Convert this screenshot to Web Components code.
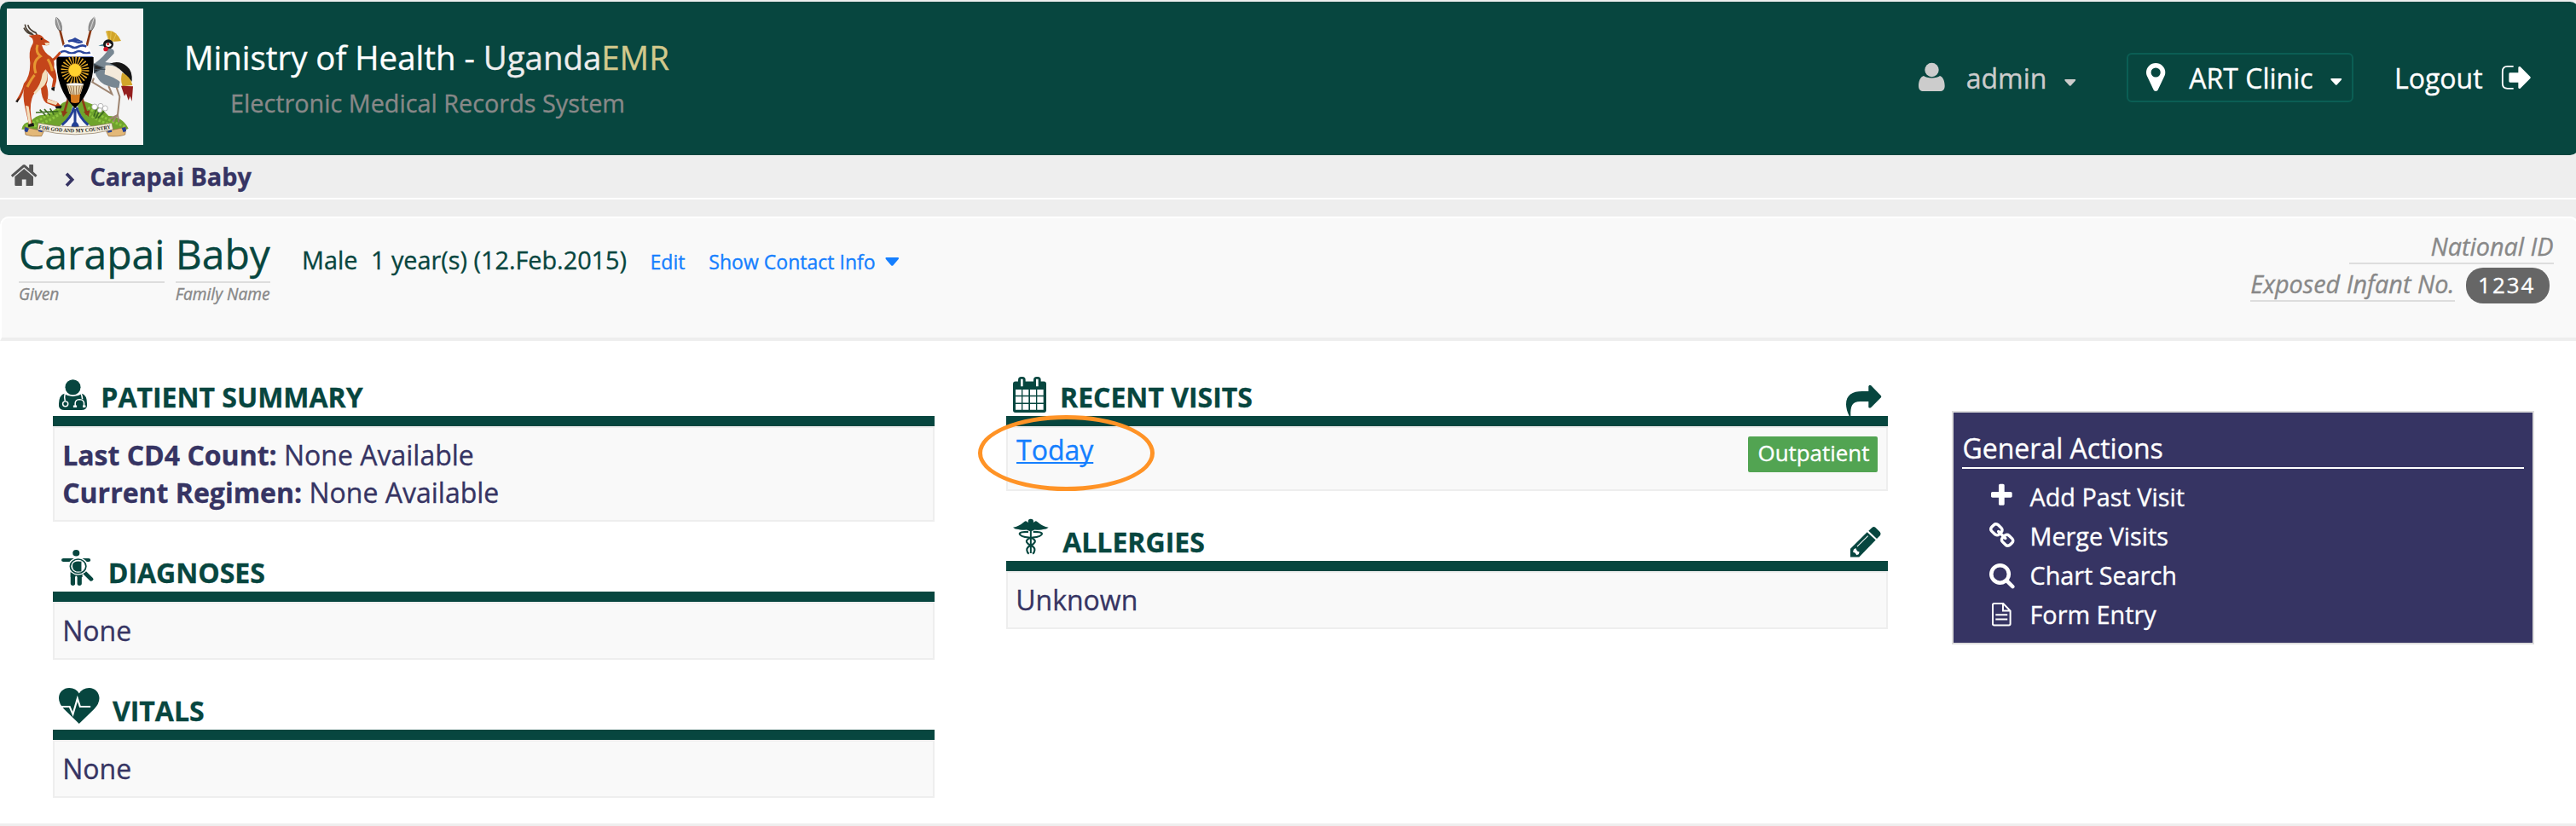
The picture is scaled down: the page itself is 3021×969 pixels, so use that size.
<!DOCTYPE html>
<html lang="en">
<head>
<meta charset="utf-8">
<title>UgandaEMR - Carapai Baby</title>
<style>
html{background:#eee}
body{margin:0;width:3021px;height:969px;overflow:hidden;background:#eee;font-family:"Open Sans",sans-serif;-webkit-text-stroke:.35px}
</style>
</head>
<body>
<emr-app></emr-app>
<script>
const ICONS = {
  home: ['88 256 1616 1280', '<path d="M1472 992v480q0 26-19 45t-45 19h-384v-384h-256v384h-384q-26 0-45-19t-19-45v-480q0-1 .5-3t.5-3l575-474 575 474q1 2 1 6zm223-69l-62 74q-8 9-21 11h-3q-13 0-21-7l-692-577-692 577q-12 8-24 7-13-2-21-11l-62-74q-8-10-7-23.5t11-21.5l719-599q32-26 76-26t76 26l244 204v-195q0-14 9-23t23-9h192q14 0 23 9t9 23v408l219 182q10 8 11 21.5t-7 23.5z"/>'],
  chevron: ['0 0 33 52', '<path d="M6 5l20 21L6 47" fill="none" stroke="currentColor" stroke-width="11"/>'],
  user: ['42 42 92 99', '<ellipse cx="88.500" cy="66" rx="24.500" ry="24.500"/><path d="M60 87C70 97 107 97 117 87C130 91 134 109 134 122C134 135 127 141 117 141H59C49 141 42 135 42 122C42 109 46 91 60 87Z"/>'],
  pin: ['384 128 1024 1536', '<path d="M1152 640q0-106-75-181t-181-75-181 75-75 181 75 181 181 75 181-75 75-181zm256 0q0 109-33 179l-364 774q-16 33-47.500 52t-67.500 19-67.500-19-46.500-52l-365-774q-33-70-33-179 0-212 150-362t362-150 362 150 150 362z"/>'],
  caret: ['0 0 40 24', '<path d="M3 0H37Q41 1 38 5L23 22Q20 25 17 22L2 5Q-1 1 3 0Z"/>'],
  logout: ['1363 79 102 84', '<path d="M1404 81.500H1383Q1365.500 81.500 1365.500 99V142Q1365.500 159.500 1383 159.500H1404" fill="none" stroke="currentColor" stroke-width="5.500"/><path d="M1389 104H1421V85Q1423 80 1428 83L1463 118Q1466 121 1463 124L1428 159Q1423 162 1421 157V138H1392Q1388 138 1388 134V108Q1388 104 1392 104Z"/>'],
  plus: ['192 192 1408 1408', '<path d="M1600 736v192q0 40-28 68t-68 28h-416v416q0 40-28 68t-68 28h-192q-40 0-68-28t-28-68v-416h-416q-40 0-68-28t-28-68v-192q0-40 28-68t68-28h416v-416q0-40 28-68t68-28h192q40 0 68 28t28 68v416h416q40 0 68 28t28 68z"/>'],
  link: ['80 16 1632 1632', '<path d="M1520 1216q0-40-28-68l-208-208q-28-28-68-28-42 0-72 32 3 3 19 18.500t21.500 21.500 15 19 13 25.500 3.500 27.500q0 40-28 68t-68 28q-15 0-27.500-3.500t-25.500-13-19-15-21.500-21.500-18.500-19q-33 31-33 73 0 40 28 68l206 207q27 27 68 27 40 0 68-26l147-146q28-28 28-67zm-703-705q0-40-28-68l-206-207q-28-28-68-28-39 0-68 27l-147 146q-28 28-28 67 0 40 28 68l208 208q27 27 68 27 42 0 72-31-3-3-19-18.500t-21.500-21.500-15-19-13-25.500-3.500-27.500q0-40 28-68t68-28q15 0 27.500 3.500t25.500 13 19 15 21.500 21.500 18.500 19q33-31 33-73zm895 705q0 120-85 203l-147 146q-83 83-203 83-121 0-204-85l-206-207q-83-83-83-203 0-123 88-209l-88-88q-86 88-208 88-120 0-204-84l-208-208q-84-84-84-204t85-203l147-146q83-83 203-83 121 0 204 85l206 207q83 83 83 203 0 123-88 209l88 88q86-88 208-88 120 0 204 84l208 208q84 84 84 204z"/>'],
  search: ['64 128 1664 1664', '<path d="M1216 832q0-185-131.500-316.500t-316.500-131.500-316.500 131.500-131.500 316.500 131.500 316.500 316.500 131.500 316.500-131.500 131.500-316.500zm512 832q0 52-38 90t-90 38q-54 0-90-38l-343-342q-179 124-399 124-143 0-273.500-55.500t-225-150-150-225-55.500-273.500 55.500-273.500 150-225 225-150 273.500-55.500 273.500 55.500 225 150 150 225 55.500 273.500q0 220-124 399l343 343q37 37 37 90z"/>'],
  file: ['167 681 68 83', '<path d="M175 684H207L232 710V756Q232 761 227 761H175Q170 761 170 756V689Q170 684 175 684ZM206 686V710H231M180 724H222M180 740H222" fill="none" stroke="currentColor" stroke-width="6"/>'],
  doctor: ['75 43 86 105', '<ellipse cx="118" cy="70" rx="23.500" ry="26.500"/><path d="M92 92Q100 100 118 101Q136 100 145 92Q161 97 161 126V134Q160 148 144 148H92Q76 148 75 134V126Q76 97 92 92Z"/><g fill="none" stroke="#fff" stroke-width="4"><path d="M94 91Q91 104 94 117"/><ellipse cx="95" cy="127" rx="8" ry="8.500"/><path d="M143 91Q147 103 147 111M125 137V124Q126 112 139 112Q151 113 152 124V137"/></g><path d="M119 132h11v7h-11zM148 132h9v7h-9z" fill="#fff"/><circle cx="95" cy="127" r="4"/>'],
  diagnosis: ['84 625 98 122', '<ellipse cx="129" cy="636" rx="10.500" ry="11"/><path d="M90 660H167" stroke="currentColor" stroke-width="12" stroke-linecap="round"/><path d="M119 704V740M139 704V740" stroke="currentColor" stroke-width="14" stroke-linecap="round"/><path d="M112 662H148V718H112Z"/><path d="M129 714V748" stroke="#fff" stroke-width="5"/><path d="M149 695L177 727" stroke="#fff" stroke-width="16"/><path d="M154 702L175 725" stroke="currentColor" stroke-width="13" stroke-linecap="round"/><circle cx="135" cy="681" r="30" fill="#fff"/><circle cx="135" cy="681" r="24" fill="#fff" stroke="currentColor" stroke-width="4.500"/><path d="M142 665Q122 662 118 675Q116 694 130 699H145V664Z"/>'],
  heart: ['75 1096 124 122', '<path d="M137 1218L92 1169Q75 1151 75 1131C75 1110 90 1096 107 1096Q128 1097 137 1115Q147 1097 168 1096C185 1096 199 1112 199 1131Q199 1151 182 1169Z"/><path d="M83 1160H108L118 1186L132 1132L140 1160H172" fill="none" stroke="#fff" stroke-width="5.500"/>'],
  calendar: ['174 37 117 125', '<path d="M182 53H283Q291 53 291 62V153Q291 162 283 162H182Q174 162 174 153V62Q174 53 182 53Z"/><rect x="192" y="37" width="26" height="42" rx="11"/><rect x="246" y="37" width="26" height="42" rx="11"/><path d="M201 45.500h8v25h-8zM255 45.500h8v25h-8z" fill="#fff"/><path fill="#fff" d="M183 82h21v20h-21zM208 82h21v20h-21zM234 82h21v20h-21zM259 82h22v20h-22zM183 106h21v22h-21zM208 106h21v22h-21zM234 106h21v22h-21zM259 106h22v22h-22zM183 132h21v20h-21zM208 132h21v20h-21zM234 132h21v20h-21zM259 132h22v20h-22z"/>'],
  caduceus: ['174 537 125 125', '<circle cx="236.500" cy="546" r="9.500"/><path d="M174 566Q195 563 214 546Q219 541 223 546L236 555L250 546Q254 541 259 546Q278 563 299 566Q292 573 280 573Q272 576 250 574L236 580L222 574Q200 577 193 573Q181 573 174 566Z"/><path d="M236.500 556V656" stroke="currentColor" stroke-width="6"/><g fill="none" stroke="currentColor" stroke-width="6.500"><path d="M228 581Q198 581 197 588Q199 599 230 601Q254 605 251 617Q248 624 236 629Q221 635 223 646Q224 654 230 658"/><path d="M245 581Q275 581 276 588Q274 599 243 601Q219 605 222 617Q225 624 237 629Q252 635 250 646Q249 654 243 658"/></g>'],
  share: ['555 66 124 108', '<path d="M566 174Q555 152 555 133C555 100 577 87 612 87H634V70Q637 63 643 67L678 103Q680 106 678 109L643 144Q637 148 634 143V123H608C577 122 570 136 571 174Z"/>'],
  pencil: ['571 563 107 106', '<path d="M630 582L660 609L602 669H571V640Z"/><path d="M635 577L647 566Q653 560 659 565L675 581Q680 587 676 593L664 605Z"/><path d="M595 632L633 595" fill="none" stroke="#fff" stroke-width="3"/><path d="M583 642L590 638L595 648L603 651L600 659L593 662L588 655L580 651Z" fill="#fff"/>']
};
const define = (tag, markup, setup) => customElements.define(tag, class extends HTMLElement {
  constructor() {
    super();
    const t = document.createElement('template');
    t.innerHTML = markup;
    this.attachShadow({mode: 'open'}).append(t.content.cloneNode(true));
  }
  connectedCallback() { if (setup) setup(this, this.shadowRoot); }
});

define('emr-icon', '<style>:host{display:block;flex:none}svg{display:block;width:100%;height:100%;overflow:visible;fill:currentColor}</style><svg preserveAspectRatio="none" aria-hidden="true"></svg>', (el, root) => {
  const [box, body] = ICONS[el.getAttribute('name')];
  const svg = root.querySelector('svg');
  svg.setAttribute('viewBox', box);
  svg.innerHTML = body;
});

define('coat-of-arms', `<style>:host{display:block;width:160px;height:160px;background:#f4f4f4;flex:none;-webkit-text-stroke:0}svg{display:block;width:160px;height:160px}</style>
<svg viewBox="24 30 480 480" role="img" aria-label="Coat of arms of Uganda">
<path d="M76 455Q82 428 108 430Q124 400 168 405Q196 386 220 362Q264 340 316 364Q352 374 382 408Q430 410 452 452Q440 462 410 456Q264 478 116 456Z" fill="#6fa32c"/>
<path d="M90 444Q150 420 215 376M120 444Q180 425 218 395M310 378Q350 410 440 446M312 400Q350 432 400 440" stroke="#8dc63f" stroke-width="9" fill="none" stroke-dasharray="8 6"/>
<path d="M126 396L205 392M140 386L160 406M156 384L176 406M176 382L190 404M340 380L330 410M352 385L336 418M366 392L345 416" stroke="#3c6a20" stroke-width="5"/>
<path d="M206 448Q248 415 255 375H274Q280 415 324 448Z" fill="#f6f6fa"/>
<path d="M218 440Q252 412 260 378M264 384V450M270 378Q278 412 310 440" stroke="#223f94" stroke-width="9" fill="none"/><path d="M250 450Q252 430 264 428Q277 430 279 450Z" fill="#223f94"/>
<g stroke="#8d3a15" stroke-width="8"><path d="M207 90L232 190M323 90L298 190M242 340L224 404M287 340L306 404"/></g>
<path d="M198 60Q220 76 217 108L206 106Q190 84 198 60ZM332 60Q310 76 312 108L324 106Q340 84 332 60Z" fill="#999" stroke="#555" stroke-width="2"/>
<path d="M198 60L212 106M332 60L317 106" stroke="#f4f4f4" stroke-width="2"/>
<path d="M216 390L238 394L222 412ZM294 394L316 388L312 411Z" fill="#8d3a15"/>
<path d="M264 132Q312 150 329 200Q334 310 264 382Q194 310 199 200Q216 150 264 132Z" fill="#fff"/>
<g fill="none" stroke="#2a459c" stroke-width="8"><path d="M240 146Q252 140 264 146T290 146"/><path d="M225 164Q238 156 250 164T276 164T304 164"/><path d="M213 184Q226 176 239 184T265 184T291 184T317 184"/></g>
<path d="M264 132L288 145H240ZM206 196H323L327 201H201Z" fill="#2a459c"/><path d="M205 190H323L326 199H202Z" fill="#fff"/>
<path d="M199 201H329Q334 312 264 382Q194 312 199 201Z"/>
<circle cx="264" cy="247" r="36" fill="none" stroke="#e6aa29" stroke-width="27" stroke-dasharray="4 5.420"/><circle cx="264" cy="247" r="23" fill="#ffd22e" stroke="#d99820" stroke-width="2"/>
<path d="M248 328H282L279 360Q264 366 250 360Z" fill="#d77b1e"/><path d="M234 297H294L284 330Q264 338 244 330Z" fill="#e9d7ae"/><path d="M240 302L249 330M248 302L255 333M258 302L261 334M269 302L268 334M280 302L275 332M289 302L281 330" stroke="#70401d" stroke-width="2"/><ellipse cx="264" cy="297" rx="31" ry="5" fill="#fff" stroke="#806030"/>
<path d="M88 86Q90 108 112 118L124 131M98 88Q104 108 126 115L132 128M84 98Q94 120 116 121" stroke="#4b4034" stroke-width="5" fill="none"/>
<path d="M101 125L124 122Q145 118 156 137L174 148Q176 160 164 160L147 158Q154 184 178 199Q194 211 190 238Q202 262 198 286L192 309L182 306L187 278L160 244Q174 270 163 298Q172 322 168 347L203 360L215 374L197 376L162 362Q146 350 144 310Q120 320 112 348Q102 380 114 438L102 440L88 378Q78 332 86 306Q76 350 60 359L58 351Q76 324 84 294Q106 270 106 222Q100 180 112 160Q120 150 114 136Z" fill="#c4451a"/>
<path d="M132 158Q124 184 142 198Q112 216 126 258M96 306Q112 274 122 264M168 208Q182 232 184 250" stroke="#e69832" stroke-width="9" fill="none"/>
<path d="M160 244Q175 270 157 299Q138 316 124 332L118 326Q144 300 149 260ZM90 371L101 374L110 436L102 440ZM166 348L204 360L197 370L166 360ZM157 151L174 150Q174 162 160 158Z" fill="#f2dfbd"/>
<path d="M54 357L70 342L62 361ZM99 438L118 432L120 444L100 447ZM194 374L218 371L215 382H197ZM181 308L193 305L191 321L181 316Z" fill="#161616"/><path d="M184 212Q198 204 212 184" stroke="#c4451a" stroke-width="9" fill="none"/><circle cx="146" cy="137" r="3"/>
<path d="M372 110Q405 100 426 144Q402 149 382 144Z" fill="#d2a52a"/><path d="M382 144L376 112M388 144L391 109M398 145L409 118" stroke="#f0d365" stroke-width="2"/>
<path d="M346 161L366 154L364 163Z" fill="#4a8294"/><ellipse cx="381" cy="156" rx="18" ry="17" fill="#161616"/><path d="M372 154Q384 144 393 158Q385 169 373 162Z" fill="#fff"/><circle cx="380" cy="155" r="4" fill="#b11"/><ellipse cx="373" cy="173" rx="9" ry="8" fill="#d51527"/>
<path d="M383 170Q405 170 401 188Q390 200 370 219L400 223Q430 244 424 276L418 310L401 308Q358 300 347 280Q326 250 332 224Q370 196 383 170Z" fill="#788792"/>
<path d="M386 224Q420 210 447 234Q467 250 464 287L430 252Q406 228 386 224Z" fill="#161616"/><path d="M371 230Q410 226 427 253Q438 272 427 292Q401 270 368 262Z" fill="#f4eadb"/><path d="M430 256Q460 270 466 300L431 304Q422 280 430 256Z" fill="#d2a52a"/><path d="M426 302L468 304L464 357L458 338L452 353L444 329L438 338Z" fill="#941e1e"/>
<path d="M332 226L362 238L332 256ZM334 244L370 244" fill="#252525" stroke="#42505a" stroke-width="4"/><path d="M330 275L325 289L394 331L382 303M410 308L421 340L414 405L386 419M414 405L418 430M411 405L398 428" stroke="#9d8470" stroke-width="6" fill="none"/>
<g fill="#fff" stroke="#999" stroke-width="2"><circle cx="333" cy="376" r="10"/><circle cx="354" cy="373" r="9"/><circle cx="370" cy="381" r="9"/><circle cx="351" cy="388" r="8"/></g>
<path d="M86 447L154 462L146 479Q112 482 90 474ZM444 447L374 462L382 479Q418 482 440 474Z" fill="#e3b878" stroke="#8f6739" stroke-width="2"/><path d="M88 447L102 452L96 466L86 462ZM140 448L155 450L148 466L134 462ZM374 450L390 448L394 464L380 467ZM428 451L442 447L444 461L434 466Z" fill="#223f94"/>
<path d="M135 433Q264 461 393 433L398 456Q264 491 132 456Z" fill="#f8f1df" stroke="#83715a" stroke-width="2"/>
<path id="motto" d="M136 452Q264 480 394 451" fill="none"/><text font-family="Liberation Serif,serif" font-size="19" font-weight="bold" fill="#222"><textPath href="#motto" textLength="256" lengthAdjust="spacingAndGlyphs">FOR GOD AND MY COUNTRY</textPath></text>
</svg>`);

define('app-header', `<style>
:host{display:flex;box-sizing:border-box;width:3024px;height:180px;padding:8px;background:#07463f;border-radius:10px;color:#fff}
.brand{margin:31px 0 0 48px;white-space:nowrap}.title{font-size:38.4px;line-height:52px}.title span{color:#eee}.title b{font-weight:400;color:#d2c98c}
.sub{font-size:28.8px;line-height:40px;margin:8px 0 0 54px;color:#888}
nav{display:flex;margin:50px 47.700px 0 auto;height:62px;font-size:32px;line-height:62px;white-space:nowrap}
.user{display:flex;color:#ccc;margin-right:60px}.clinic{display:flex;box-sizing:border-box;width:266px;height:58px;margin-top:2px;border:2px solid #0b5e54;border-radius:6px;line-height:54px;padding-left:20.700px;margin-right:48px}.out{display:flex}
.user>span{margin:1px 20.200px 0 24.700px;width:94.700px}.clinic>span{margin:1px 20.700px 0 28.300px;width:145.300px}.out>span{margin:1px 22.700px 0 0;width:103.600px}
.i1{width:30.700px;height:33px;margin-top:14px}.i2{width:13.500px;height:8px;margin-top:32.500px}.i3{width:22.300px;height:33px;margin-top:10px}.i4{width:13.500px;height:8px;margin-top:28px}.i5{width:34px;height:28px;margin-top:16.500px}
</style><coat-of-arms></coat-of-arms>
<div class="brand"><div class="title">Ministry of Health - <span>Uganda</span><b>EMR</b></div><div class="sub">Electronic Medical Records System</div></div>
<nav><div class="user"><emr-icon class="i1" name="user"></emr-icon><span>admin</span><emr-icon class="i2" name="caret"></emr-icon></div>
<div class="clinic"><emr-icon class="i3" name="pin"></emr-icon><span>ART Clinic</span><emr-icon class="i4" name="caret"></emr-icon></div>
<div class="out"><span>Logout</span><emr-icon class="i5" name="logout"></emr-icon></div></nav>`);

define('bread-crumbs', `<style>:host{display:flex;box-sizing:border-box;height:52px;border-bottom:2px solid #fff;padding-left:13.300px;color:#363463}
.h{width:30.400px;height:25px;margin-top:11px;color:#555}.c{width:11px;height:17.500px;margin:19.500px 18.400px 0 32.300px}span{font:bold 28.800px/50px "Open Sans",sans-serif}</style>
<emr-icon class="h" name="home"></emr-icon><emr-icon class="c" name="chevron"></emr-icon><span><slot></slot></span>`);

define('name-part', `<style>:host{display:block;width:max-content}.n{font-size:48px;line-height:63px;border-bottom:2px solid #ddd;color:#07463f;height:64px}em{display:block;font-size:19.200px;line-height:26px;color:#888}</style><div class="n"><slot></slot></div><em><slot name="label"></slot></em>`);

define('patient-banner', `<style>
:host{display:flex;box-sizing:border-box;width:3024px;height:146px;margin-top:20px;border:2px solid #fff;border-bottom:4px solid #eee;border-radius:10px 10px 0 0;background:#f9f9f9;padding:10px 27.400px 0 20px;font-size:28.800px;color:#07463f;white-space:nowrap}
.demo{margin:14px 0 0 37.200px;line-height:50px;display:flex}.demo span+span{margin-left:15.600px}a{color:#157fff;font-size:23.040px}.edit{margin:2px 0 0 27.500px}.show{margin:2px 0 0 27.900px}.tri{width:16.500px;height:10px;margin:22px 0 0 11.500px;color:#157fff}
.ids{margin:4px 0 0 auto;text-align:right;color:#888;font-style:italic}.line{display:block;min-width:239.400px;box-sizing:border-box;height:40px;line-height:38px;border-bottom:2px solid #ddd}
.r1{display:flex;justify-content:flex-end}.r2{display:flex;height:44px;align-items:flex-start;margin-top:4px}
.num{font-style:normal;font-size:25.920px;letter-spacing:2px;line-height:41px;height:42px;background:#666;color:#fff;border-radius:20px;padding-left:14px;width:84px;text-align:left;margin:0 4.500px 0 13.500px}
name-part+name-part{margin-left:12.400px}</style>
<name-part>Carapai<span slot="label">Given</span></name-part><name-part>Baby<span slot="label">Family Name</span></name-part>
<div class="demo"><span>Male</span><span>1 year(s) (12.Feb.2015)</span><a class="edit">Edit</a><a class="show">Show Contact Info</a><emr-icon class="tri" name="caret"></emr-icon></div>
<div class="ids"><div class="r1"><span class="line">National ID</span></div><div class="r2"><span class="line">Exposed Infant No.</span><span class="num">1234</span></div></div>`);

define('info-section', `<style>:host{display:block;color:#363463;font-size:32px;line-height:44px}
header{display:flex;box-sizing:border-box;height:82px;padding-left:var(--x,6.700px);padding-right:8px;color:#07463f}
.i{width:var(--w);height:var(--h);margin-top:var(--t)}h2{font:bold 32px/44px "Open Sans",sans-serif;margin:38px 0 0 var(--g)}.act{margin-left:auto}
.bar{height:12px;background:#07463f}.box{border:2px solid #eee;background:#f9f9f9;padding:var(--pad,10px 9.200px)}</style>
<header><span class="i"></span><h2></h2><div class="act"><slot name="action"></slot></div></header><div class="bar"></div><div class="box"><slot></slot></div>`, (el, root) => {
  const icon = document.createElement('emr-icon');
  icon.className = 'i';
  icon.setAttribute('name', el.getAttribute('icon'));
  root.querySelector('.i').replaceWith(icon);
  root.querySelector('h2').textContent = el.getAttribute('heading');
});

define('visit-row', `<style>:host{display:flex;justify-content:space-between;height:64px;position:relative}a{color:#157fff;text-decoration:underline;text-decoration-thickness:2px;text-underline-offset:2px;text-decoration-skip-ink:none}
b{font:400 25.920px/38px "Open Sans",sans-serif;background:#52a452;color:#fff;border-radius:2px;height:42px;width:152px;box-sizing:border-box;padding-left:11.500px;margin-top:6px}
i{position:absolute;left:-44.700px;top:-18.800px;width:206.400px;height:88.700px;box-sizing:border-box;border:5px solid #ff9326;border-radius:50%}</style>
<a><slot></slot></a><b><slot name="type"></slot></b><i></i>`);

define('action-item', `<style>:host{display:flex;height:46px;line-height:46px;font-size:28.800px}.f{width:80px;display:flex}.i{width:var(--w);height:var(--h);margin:var(--t) 0 0 var(--l)}</style><div class="f"></div><span><slot></slot></span>`, (el, root) => {
  const icon = document.createElement('emr-icon');
  icon.className = 'i';
  icon.setAttribute('name', el.getAttribute('icon'));
  root.querySelector('.f').replaceChildren(icon);
});

define('general-actions', `<style>:host{display:block;box-sizing:border-box;width:683px;height:274px;border:2px solid #ddd;background:#363463;color:#fff;padding:19px 10px 0}
h3{font:400 32px/45px "Open Sans",sans-serif;margin:0;border-bottom:2px solid #fff;box-sizing:border-box;height:47px;padding-left:1px}div{padding-top:10px}</style><h3>General Actions</h3><div>
<action-item icon="plus" style="--w:24.700px;--h:25px;--t:9px;--l:34.700px">Add Past Visit</action-item>
<action-item icon="link" style="--w:29.500px;--h:29px;--t:7px;--l:32px">Merge Visits</action-item>
<action-item icon="search" style="--w:29.700px;--h:29.500px;--t:9px;--l:32px">Chart Search</action-item>
<action-item icon="file" style="--w:22.600px;--h:27.500px;--t:9px;--l:35.700px">Form Entry</action-item></div>`);

define('emr-app', `<style>:host{display:block;width:3024px;padding-top:2px}
main{display:grid;grid-template-columns:1034px 1034px 683px;column-gap:84px;height:560px;align-items:start;padding:6px 0 0 62px;background:#fff}
general-actions{margin:76px 0 0 -9.500px}</style>
<app-header></app-header><bread-crumbs>Carapai Baby</bread-crumbs><patient-banner></patient-banner>
<main><div>
<info-section icon="doctor" heading="PATIENT SUMMARY" style="--w:33px;--h:36px;--t:38.800px;--g:16.600px"><div><b>Last CD4 Count:</b> None Available</div><div><b>Current Regimen:</b> None Available</div></info-section>
<info-section icon="diagnosis" heading="DIAGNOSES" style="--x:10px;--w:37.700px;--h:42px;--t:32.800px;--g:17px">None</info-section>
<info-section icon="heart" heading="VITALS" style="--w:47.500px;--h:42px;--t:32.800px;--g:15.700px">None</info-section>
</div><div>
<info-section icon="calendar" heading="RECENT VISITS" style="--x:8px;--w:39px;--h:42px;--t:36px;--g:16px;--pad:4px 10px"><emr-icon slot="action" name="share" style="width:41.300px;height:36px;margin-top:46px"></emr-icon><visit-row>Today<span slot="type">Outpatient</span></visit-row></info-section>
<info-section icon="caduceus" heading="ALLERGIES" style="--x:8px;--w:41.700px;--h:42px;--t:33px;--g:16.500px"><emr-icon slot="action" name="pencil" style="width:35.700px;height:35.500px;margin-top:41.700px"></emr-icon>Unknown</info-section>
</div><general-actions></general-actions></main>`);
</script>
</body>
</html>
